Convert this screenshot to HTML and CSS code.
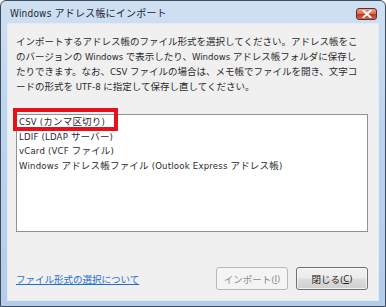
FILE: index.html
```html
<!DOCTYPE html>
<html lang="ja">
<head>
<meta charset="utf-8">
<title>Windows アドレス帳にインポート</title>
<link rel="stylesheet" href="styles.css">
</head>
<body>
<div class="window">
  <div class="titlebar">
    <span class="title">Windows アドレス帳にインポート</span>
    <span class="close-btn">
      <svg width="10" height="8" viewBox="0 0 10 8"><path d="M1.5 0.8 L8.5 7.2 M8.5 0.8 L1.5 7.2" stroke="#fff" stroke-width="2" stroke-linecap="square"/></svg>
    </span>
  </div>
  <div class="client">
    <p class="intro">インポートするアドレス帳のファイル形式を選択してください。アドレス帳をこ<br>のバージョンの Windows で表示したり、Windows アドレス帳フォルダに保存し<br>たりできます。なお、CSV ファイルの場合は、メモ帳でファイルを開き、文字コ<br>ードの形式を UTF-8 に指定して保存し直してください。</p>
    <div class="listbox">
      <div class="item">CSV (カンマ区切り)</div>
      <div class="item">LDIF (LDAP サーバー)</div>
      <div class="item">vCard (VCF ファイル)</div>
      <div class="item">Windows アドレス帳ファイル (Outlook Express アドレス帳)</div>
      <div class="highlight"></div>
    </div>
    <div class="footer">
      <a class="help-link" href="#">ファイル形式の選択について</a>
      <div class="buttons">
        <span class="btn btn-disabled">インポート(<u>I</u>)</span>
        <span class="btn">閉じる(<u>C</u>)</span>
      </div>
    </div>
  </div>
</div>
</body>
</html>
```

FILE: styles.css
```css
* { box-sizing: border-box; }
html, body { margin: 0; padding: 0; background: #fff; }
body {
  font-family: "DejaVu Sans Condensed", "Noto Sans CJK JP", sans-serif;
  font-size: 9.5px;
  color: #222;
}
.window {
  width: 386px;
  height: 307px;
  border: 1px solid #3d4b5c;
  border-radius: 6px 6px 0 0;
  background: linear-gradient(180deg, #cfe0f2 0%, #bcd4ee 40%, #b3cdea 100%);
  display: flex;
  flex-direction: column;
}
.titlebar {
  height: 22px;
  flex: none;
  display: flex;
  align-items: center;
  justify-content: space-between;
  padding: 1px 8px 0 9px;
}
.title {
  color: #1c2633;
  font-size: 10px;
  letter-spacing: 0.2px;
}
.close-btn {
  width: 21px;
  height: 12px;
  margin-top: 2px;
  border: 1px solid #6b2a20;
  border-radius: 3px;
  background: linear-gradient(180deg, #e8a493 0%, #d8705a 45%, #c1391f 55%, #d2654d 100%);
  display: flex;
  align-items: center;
  justify-content: center;
}
.client {
  flex: 1;
  margin: 0 6px 5px 6px;
  background: #f0f0f0;
  border: 1px solid #e3ebf5;
  padding: 10px 10px 10px 8px;
  display: flex;
  flex-direction: column;
}
.intro {
  margin: 0;
  line-height: 15px;
  white-space: nowrap;
  color: #2a2a2a;
}
.listbox {
  position: relative;
  margin-top: 20px;
  height: 118px;
  background: #fff;
  border: 1px solid #8b929b;
  padding: 0 2px;
}
.item {
  line-height: 14.5px;
  white-space: nowrap;
  color: #2a2a2a;
  letter-spacing: 0.2px;
}
.highlight {
  position: absolute;
  left: -4px;
  top: -7px;
  width: 105px;
  height: 23px;
  border: 4px solid #e8101b;
}
.footer {
  margin-top: auto;
  display: flex;
  align-items: center;
  justify-content: space-between;
}
.help-link {
  color: #1f6fd0;
  text-decoration: underline;
}
.buttons {
  display: flex;
  gap: 8px;
}
.btn {
  width: 72px;
  height: 23px;
  display: flex;
  align-items: center;
  justify-content: center;
  border: 1px solid #707070;
  border-radius: 3px;
  background: linear-gradient(180deg, #f3f3f3 0%, #ebebeb 49%, #dddddd 51%, #cfcfcf 100%);
  color: #1e1e1e;
  box-shadow: inset 0 0 0 1px rgba(255,255,255,0.7);
}
.btn u { text-decoration: underline; }
.btn-disabled {
  border-color: #b5b9bd;
  background: #f4f4f4;
  color: #8a8a8a;
  box-shadow: none;
}
```
